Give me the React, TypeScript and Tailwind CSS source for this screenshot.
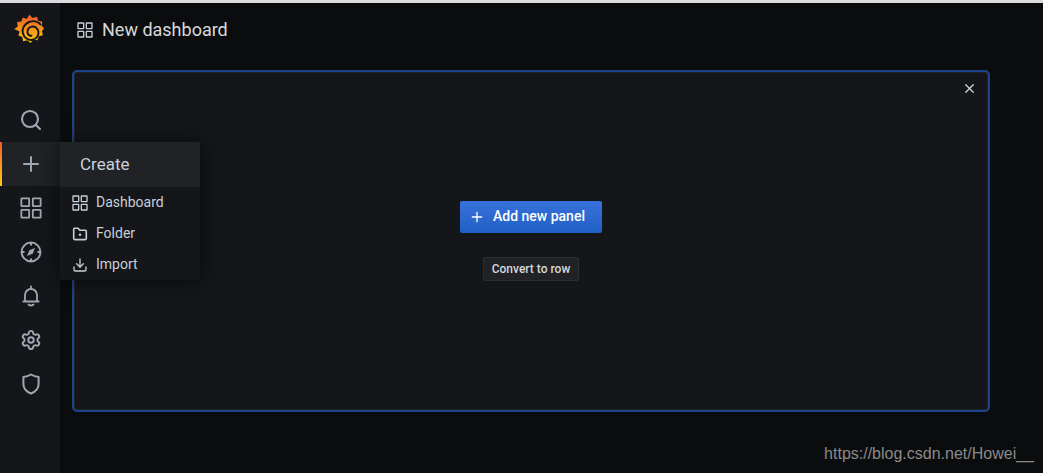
import React from 'react';
import { Search, Plus, Settings, Download, X } from 'lucide-react';

const AppsIcon = ({ size = 16, className = '' }: { size?: number; className?: string }) => (
    <svg width={size} height={size} viewBox="0 0 24 24" fill="none" stroke="currentColor" strokeWidth="2" className={className}>
        <rect x="1.5" y="1.5" width="8.5" height="8.5" rx="0.5" />
        <rect x="14" y="1.5" width="8.5" height="8.5" rx="0.5" />
        <rect x="1.5" y="14" width="8.5" height="8.5" rx="0.5" />
        <rect x="14" y="14" width="8.5" height="8.5" rx="0.5" />
    </svg>
);

const CompassIcon = () => (
    <svg width={22} height={22} viewBox="0 0 22 22" fill="none" stroke="currentColor" strokeWidth="2">
        <circle cx="11" cy="11" r="9.4" />
        <path d="M11 1.5v3M11 17.5v3M1.5 11h3M17.5 11h3" />
        <path d="M15 7l-2.3 5.7L7 15l2.3-5.7z" fill="currentColor" stroke="none" />
    </svg>
);

const BellIcon = () => (
    <svg width={22} height={22} viewBox="0 0 22 22" fill="none" stroke="currentColor" strokeWidth="1.8" strokeLinecap="round">
        <path d="M11 1.5v2" />
        <path d="M5 15.5V10a6 6 0 0 1 12 0v5.5" />
        <path d="M3.5 16.5h15" strokeWidth="2.2" />
        <path d="M8.5 19.5c1.5 1.3 3.5 1.3 5 0" />
    </svg>
);

const ShieldIcon = () => (
    <svg width={22} height={22} viewBox="0 0 22 22" fill="none" stroke="currentColor" strokeWidth="2" strokeLinejoin="round">
        <path d="M11 1.5c2.2 1.4 5 2.3 7.600 2.500v7c0 4.600-3.200 7.800-7.600 9.500-4.400-1.700-7.600-4.900-7.600-9.500V4c2.600-.2 5.400-1.100 7.600-2.500z" />
    </svg>
);

const FolderIcon = () => (
    <svg width={16} height={16} viewBox="0 0 16 16" fill="none" stroke="currentColor" strokeWidth="1.6">
        <path d="M1.700 3.200c0-.6.4-1 1-1h3.400l1.600 2h5.600c.6 0 1 .4 1 1v7.400c0 .6-.4 1-1 1H2.700c-.6 0-1-.4-1-1z" />
        <circle cx="8" cy="8.800" r="1.200" fill="currentColor" stroke="none" />
    </svg>
);

const GrafanaLogo = () => (
    <svg width={32} height={32} viewBox="0 0 32 32">
        <defs>
            <linearGradient id="grafanaFill" x1="0" y1="0" x2="0" y2="1">
                <stop offset="0" stopColor="#f05a28" />
                <stop offset="1" stopColor="#fbca0a" />
            </linearGradient>
        </defs>
        <path
            d="M15.500 .5l2.800 3.600 4.800-1.400.9 4 4.200 1-.5 4.100 2.300 2.500-2 3 .9 4-4 .9-1.600 4.100-4-.6-2.800 3.200-3.200-2.600-4.200 1-.9-4.200-3.800-1.600 1.200-3.900L.3 15l3.400-2.600-.6-4.300 4.200-.6 1.500-4 3.900 1.400z"
            fill="url(#grafanaFill)"
        />
        <path
            d="M26.500 10.500C23.500 7 19 6.500 15 8 10.500 9.800 7.800 14.500 8.800 19c1 4.800 5.600 7.800 10 6.800 3.800-.8 6.200-4.400 5.600-8.200-.5-3.200-3.400-5.500-6.600-5-2.800.4-4.700 3-4.300 5.700.3 2.100 2.100 3.500 4 3.400"
            fill="none"
            stroke="#141619"
            strokeWidth="1.900"
            strokeLinecap="round"
        />
    </svg>
);

const NavItem = ({ children, active = false }: { children: React.ReactNode; active?: boolean }) => (
    <div className={`relative h-11 flex items-center justify-center pl-[2px] text-[#9fa7b3] ${active ? 'bg-[#202226]' : ''}`}>
        {active && <div className="absolute left-0 top-0 bottom-0 w-[2px] bg-gradient-to-b from-[#f05a28] to-[#fbca0a]"></div>}
        {children}
    </div>
);

const App = () => {
    const menu = [
        { label: 'Dashboard', icon: <AppsIcon /> },
        { label: 'Folder', icon: <FolderIcon /> },
        { label: 'Import', icon: <Download size={16} strokeWidth={2} /> },
    ];

    return (
        <div className="relative h-screen overflow-hidden bg-[#0b0c0e] flex flex-col font-['Roboto',sans-serif]">
            <div className="h-[3px] shrink-0 bg-[#dcdcdc]"></div>
            <div className="flex flex-1 min-h-0">
                <aside className="w-[60px] shrink-0 bg-[#141619]">
                    <div className="h-[95px] flex justify-center pt-[11px] pr-[1px]">
                        <GrafanaLogo />
                    </div>
                    <NavItem><Search size={24} strokeWidth={2.1} /></NavItem>
                    <NavItem active><Plus size={24} strokeWidth={2} /></NavItem>
                    <NavItem><AppsIcon size={22} /></NavItem>
                    <NavItem><CompassIcon /></NavItem>
                    <NavItem><BellIcon /></NavItem>
                    <NavItem><Settings size={22} strokeWidth={2.1} /></NavItem>
                    <NavItem><ShieldIcon /></NavItem>
                </aside>

                <main className="flex-1 min-w-0 pl-3 pr-[53px]">
                    <header className="h-[67px] flex items-center gap-[9px] pl-[5px] pb-[13px] text-[#d8d9da]">
                        <AppsIcon className="text-[#c7d0d9]" />
                        <h1 className="text-[18px] leading-none font-normal">New dashboard</h1>
                    </header>
                    <section className="relative h-[342px] rounded-[5px] border-2 border-[#1a458a] bg-[#202226] p-px">
                        <div className="relative h-full rounded-[3px] bg-[#141619] flex flex-col items-center justify-center gap-6">
                            <X size={15} strokeWidth={1.9} className="absolute top-[8px] right-[10px] text-[#d8d9da]" />
                            <button className="w-[142px] h-8 rounded-[2px] pl-[9px] pb-[1px] bg-gradient-to-b from-[#3871dc] to-[#1f60c4] text-white text-[14px] font-medium flex items-center gap-2">
                                <Plus size={16} strokeWidth={2} />
                                <span>Add new panel</span>
                            </button>
                            <button className="w-[96px] h-6 rounded-[2px] bg-[#202226] border border-[#2c2e33] text-[#d8d9da] text-[12px] font-medium">
                                Convert to row
                            </button>
                        </div>
                    </section>
                </main>
            </div>

            <div className="absolute left-[60px] top-[142px] w-[140px] bg-[#141619] shadow-[0_0_20px_rgba(0,0,0,0.6)]">
                <div className="h-[45px] flex items-center pl-5 bg-[#202226] text-[17px] text-[#c7d0d9]">Create</div>
                <ul>
                    {menu.map((item) => (
                        <li key={item.label} className="h-[31px] flex items-center gap-2 pl-3 text-[14px] text-[#c7d0d9]">
                            {item.icon}
                            <span>{item.label}</span>
                        </li>
                    ))}
                </ul>
            </div>

            <div className="absolute right-[9px] bottom-[9px] text-[16px] leading-[20px] text-[#8a8a8a] font-['Liberation_Sans',sans-serif]">
                https://blog.csdn.net/Howei__
            </div>
        </div>
    );
};

export default App;
